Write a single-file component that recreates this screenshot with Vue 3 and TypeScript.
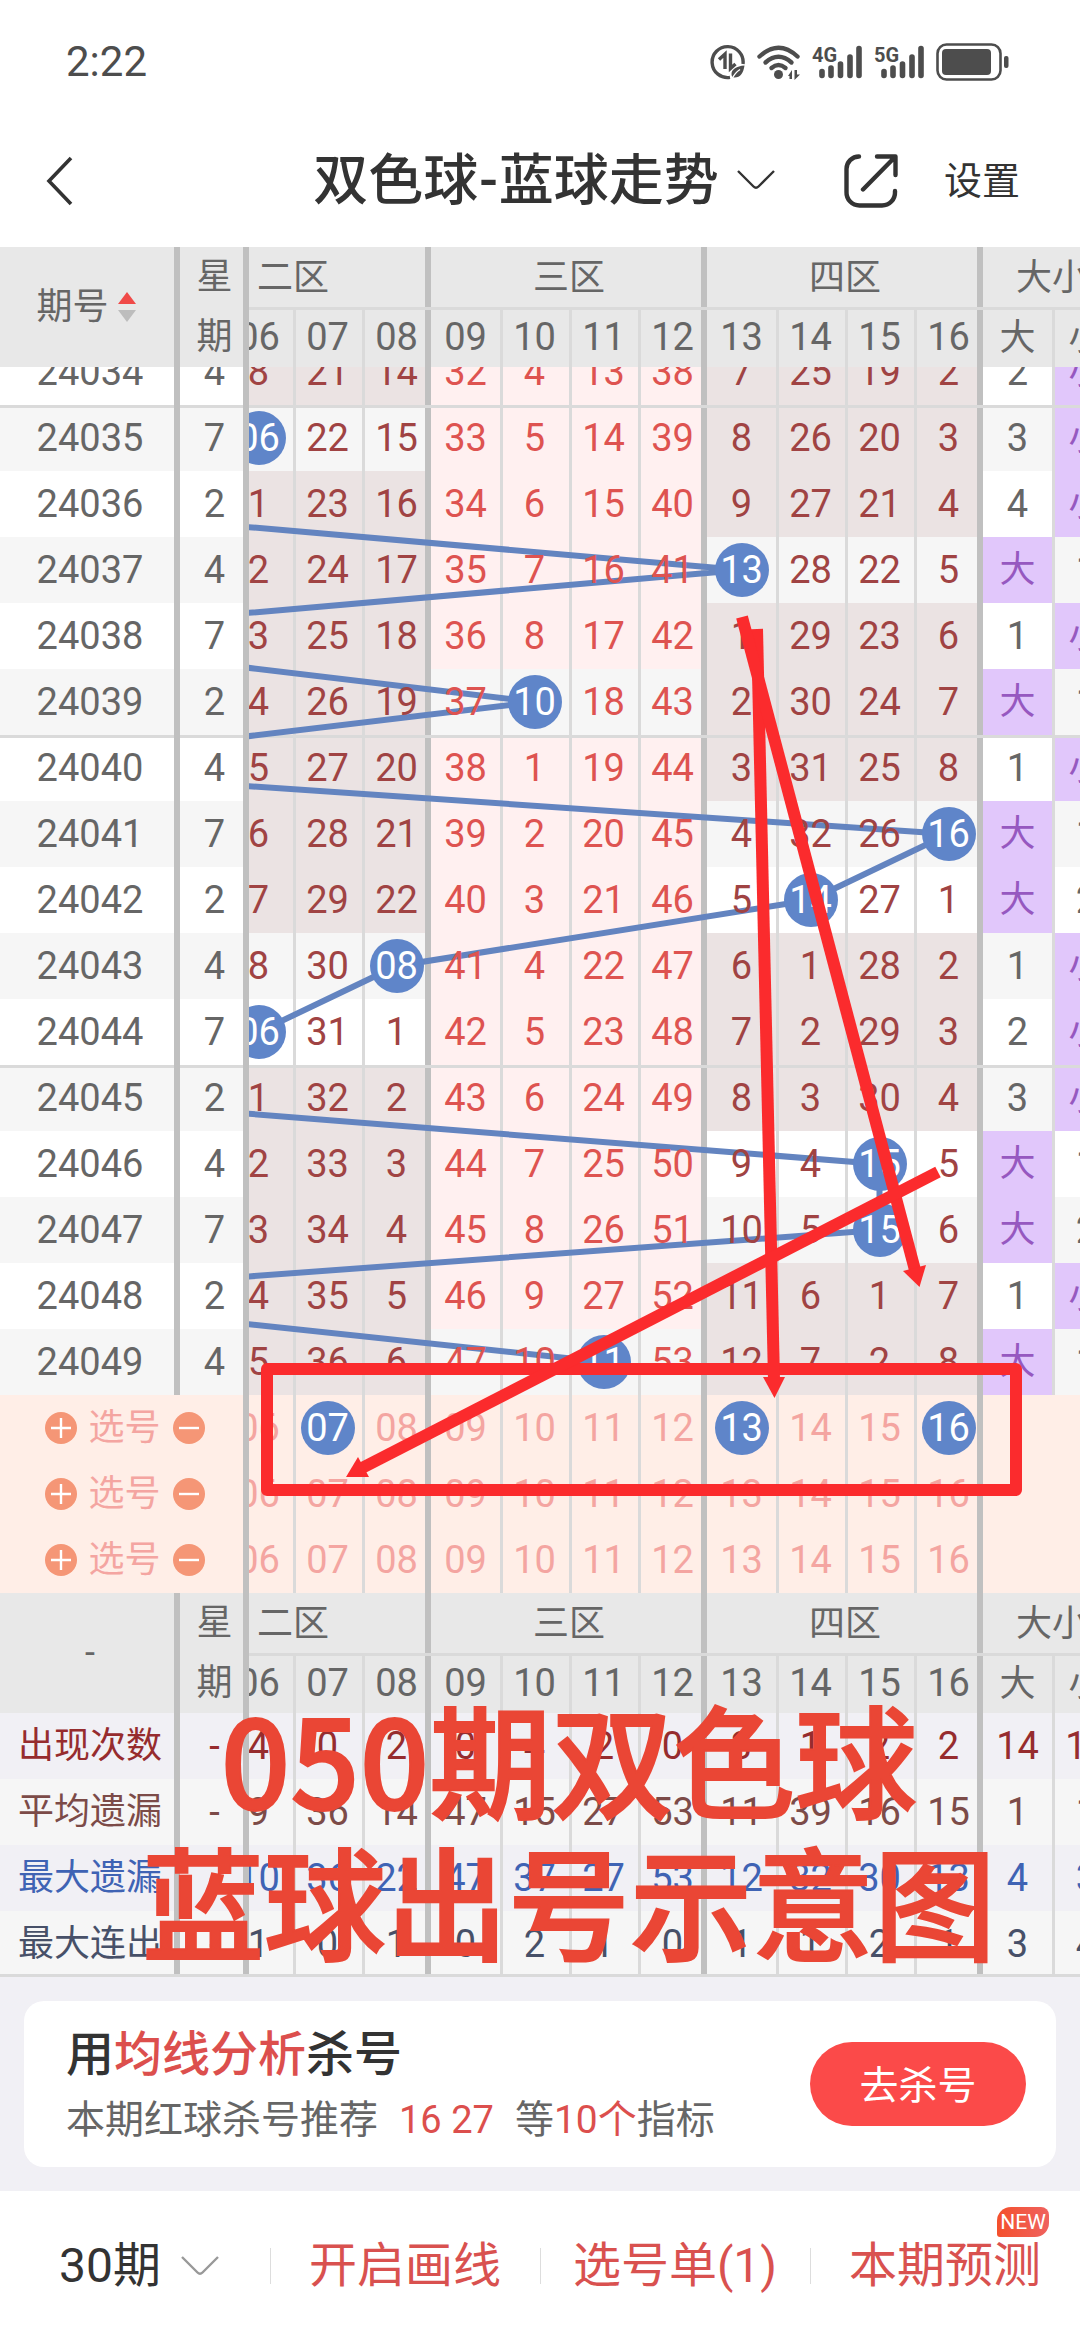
<script setup lang="ts">
import { ref } from 'vue'

type Kind = 'miss' | 'hit'
interface Cell { no: number; zone: number; kind: Kind; text: string; zoneHit: boolean }
interface Row { issue: number; week: number; cells: Cell[]; big: number; small: number }

const ROW = 66
const COL = 69
const FIRST = 5
const numbers = Array.from({ length: 12 }, (_, i) => i + FIRST)
const pad = (n: number) => String(n).padStart(2, '0')
const zoneOf = (n: number) => Math.ceil(n / 4)
const isZoneEnd = (n: number) => n % 4 === 0
const isZoneStart = (n: number) => n % 4 === 1

const zones = [
  { name: '二区', span: 4 },
  { name: '三区', span: 4 },
  { name: '四区', span: 4 },
]

// winning blue ball of each issue, from 24034 on
const draws = [3, 6, 2, 13, 2, 10, 2, 16, 14, 8, 6, 3, 15, 15, 2, 11]
const weeks = [4, 7, 2, 4, 7, 2, 4, 7, 2, 4, 7, 2, 4, 7, 2, 4]

function buildRows(): Row[] {
  const miss: Record<number, number> = {
    5: 16, 6: 7, 7: 20, 8: 13, 9: 31, 10: 3, 11: 12, 12: 37, 13: 6, 14: 24, 15: 18, 16: 1,
  }
  let big = 1
  let small = 0
  return draws.map((draw, i) => {
    const cells = numbers.map((no): Cell => {
      const hit = no === draw
      miss[no] = hit ? 0 : miss[no] + 1
      return {
        no,
        zone: zoneOf(no),
        kind: hit ? 'hit' : 'miss',
        text: hit ? pad(no) : String(miss[no]),
        zoneHit: zoneOf(draw) === zoneOf(no),
      }
    })
    big = draw > 8 ? 0 : big + 1
    small = draw > 8 ? small + 1 : 0
    return { issue: 24034 + i, week: weeks[i], cells, big, small }
  })
}
const rows = buildRows()

const trend = draws
  .map((n, i) => `${(n - FIRST) * COL + COL / 2},${i * ROW + ROW / 2}`)
  .join(' ')

const picks = ref<number[][]>([[7, 13, 16], [], []])
function toggle(line: number, n: number) {
  const list = picks.value[line]
  const at = list.indexOf(n)
  if (at < 0) list.push(n)
  else list.splice(at, 1)
}

const stats = [
  { key: 'count', name: '出现次数', values: [1, 4, 0, 2, 0, 4, 2, 0, 3, 1, 2, 2, 14, 16] },
  { key: 'avg', name: '平均遗漏', values: [16, 9, 36, 14, 47, 15, 27, 53, 11, 39, 16, 15, 1, 1] },
  { key: 'max', name: '最大遗漏', values: [16, 10, 36, 22, 47, 37, 27, 53, 12, 32, 30, 13, 4, 3] },
  { key: 'run', name: '最大连出', values: [1, 1, 0, 1, 0, 2, 1, 0, 1, 1, 2, 1, 3, 4] },
]
</script>

<template>
  <div class="app">
    <div class="status">
      <span class="clock">2:22</span>
      <div class="status-icons">
        <svg width="36" height="36" viewBox="0 0 36 36">
          <path d="M20 33.4A15.5 15.5 0 1 1 33 20" fill="none" stroke="#4d4d4d" stroke-width="3.4" />
          <path d="M9 15.5 15 10V25M20.5 9.500V24.500l5-4.500" fill="none" stroke="#4d4d4d" stroke-width="3.4" />
          <path d="M34.500 21.500c-8 .5-13 4-13 8.500 0 2.500 1 3.600 3 3.600 6 0 9-5 10-12.100z" fill="#4d4d4d" />
          <path d="M22 35c2-4.500 5-7.500 8-9.500" fill="none" stroke="#fff" stroke-width="1.400" />
        </svg>
        <svg width="46" height="36" viewBox="0 0 46 36">
          <g fill="none" stroke="#4d4d4d" stroke-width="4.400" stroke-linecap="round">
            <path d="M3.500 12.500Q22.500-5 41.500 12.500" />
            <path d="M9.500 18.500Q22.500 7 35.500 18.500" />
            <path d="M15.500 24Q22.500 18 29.500 24" />
          </g>
          <circle cx="22.500" cy="30.500" r="4.500" fill="#4d4d4d" />
          <path d="M32 32 36 26v9h-2.500v-3zM38.500 26H41v4.500h3L38.500 36z" fill="#4d4d4d" />
        </svg>
        <svg v-for="g in ['4G', '5G']" :key="g" width="52" height="36" viewBox="0 0 52 36">
          <text x="0" y="18" class="net">{{ g }}</text>
          <g stroke="#4d4d4d" stroke-width="5.600" stroke-linecap="round">
            <path d="M10 27.500V31.500M19 24V31.500M28.500 20V31.500M38 13V31.500M47 4.500V31.500" />
          </g>
        </svg>
        <svg width="74" height="38" viewBox="0 0 74 38">
          <rect x="1.500" y="1.500" width="63" height="35" rx="9" fill="none" stroke="#4d4d4d" stroke-width="2.600" />
          <rect x="6" y="6" width="49" height="26" rx="4" fill="#4d4d4d" />
          <rect x="68" y="13" width="4.500" height="12" rx="2" fill="#4d4d4d" />
        </svg>
      </div>
    </div>

    <header class="nav">
      <button class="back" aria-label="返回">
        <svg width="28" height="50" viewBox="0 0 28 50"><path d="M25 2 3 25 25 48" fill="none" stroke="#333" stroke-width="3.600" /></svg>
      </button>
      <button class="title">
        <span>双色球<span class="dash">-</span>蓝球走势</span>
        <svg width="38" height="20" viewBox="0 0 38 20"><path d="M1 1 16.500 16.500Q19 19 21.500 16.500L37 1" fill="none" stroke="#333" stroke-width="2.400" /></svg>
      </button>
      <div class="actions">
        <button aria-label="分享">
          <svg width="54" height="54" viewBox="0 0 54 54">
            <g fill="none" stroke="#333" stroke-width="4.400" stroke-linecap="round" stroke-linejoin="round">
              <path d="M15 2.500A12.500 12.500 0 0 0 2.500 15V38A13 13 0 0 0 15.500 51.500H38A13 13 0 0 0 51 38V37" />
              <path d="M33 2.500H51.500V21M51 3 19 35.500" />
            </g>
          </svg>
        </button>
        <button class="setting">设置</button>
      </div>
    </header>

    <main class="chart">
      <div class="frozen">
        <table class="grid left">
          <colgroup><col class="c-issue"><col class="c-week"></colgroup>
          <thead>
            <tr class="head-left">
              <th class="thick-r">
                <button class="sort">
                  期号
                  <svg width="18" height="30" viewBox="0 0 18 30"><path d="M9 0 18 12H0z" fill="#f04a48" /><path d="M0 18H18L9 30z" fill="#bdbdbd" /></svg>
                </button>
              </th>
              <th class="thick-r stack">星<br>期</th>
            </tr>
          </thead>
        </table>
        <div class="clip">
          <table class="grid left sheet">
            <colgroup><col class="c-issue"><col class="c-week"></colgroup>
            <tbody>
              <tr v-for="(r, i) in rows" :key="r.issue" :class="{ alt: i % 2 === 1, cut: i % 5 === 1 }">
                <td class="thick-r">{{ r.issue }}</td>
                <td class="thick-r">{{ r.week }}</td>
              </tr>
            </tbody>
          </table>
        </div>
        <table class="grid left">
          <colgroup><col class="c-issue"><col class="c-week"></colgroup>
          <tbody>
            <tr v-for="n in 3" :key="n" class="pick">
              <td colspan="2" class="thick-r">
                <div class="pick-tools">
                  <button aria-label="添加"><svg width="32" height="32" viewBox="0 0 32 32"><circle cx="16" cy="16" r="16" fill="#f59676" /><path d="M6 16H26M16 6V26" stroke="#fff" stroke-width="2.400" /></svg></button>
                  <span>选号</span>
                  <button aria-label="删除"><svg width="32" height="32" viewBox="0 0 32 32"><circle cx="16" cy="16" r="16" fill="#f59676" /><path d="M6 16H26" stroke="#fff" stroke-width="2.400" /></svg></button>
                </div>
              </td>
            </tr>
            <tr class="head-left">
              <th class="thick-r">-</th>
              <th class="thick-r stack">星<br>期</th>
            </tr>
            <tr v-for="s in stats" :key="s.key" class="stat" :class="s.key">
              <td class="thick-r zh">{{ s.name }}</td>
              <td class="thick-r">-</td>
            </tr>
          </tbody>
        </table>
      </div>

      <div class="pane">
        <div class="scroll">
          <table class="grid wide">
            <thead>
              <tr class="head">
                <th v-for="z in zones" :key="z.name" :colspan="z.span" class="thick-r zh">{{ z.name }}</th>
                <th colspan="2" class="zh">大小</th>
              </tr>
              <tr class="head second">
                <th v-for="n in numbers" :key="n" :class="{ 'thick-r': isZoneEnd(n), 'thin-l': !isZoneStart(n) }">{{ pad(n) }}</th>
                <th class="zh">大</th>
                <th class="zh thin-l">小</th>
              </tr>
            </thead>
          </table>
          <div class="clip">
            <div class="sheet">
              <table class="grid wide">
                <tbody>
                  <tr v-for="(r, i) in rows" :key="r.issue" :class="{ alt: i % 2 === 1, cut: i % 5 === 1 }">
                    <td
                      v-for="c in r.cells"
                      :key="c.no"
                      :class="['z' + c.zone, { cold: !c.zoneHit, 'thick-r': isZoneEnd(c.no), 'thin-l': !isZoneStart(c.no) }]"
                    ><span class="n" :class="{ ball: c.kind === 'hit' }">{{ c.text }}</span></td>
                    <td :class="{ lilac: r.big === 0 }"><span class="n">{{ r.big || '大' }}</span></td>
                    <td class="thin-l" :class="{ lilac: r.small === 0 }"><span class="n">{{ r.small || '小' }}</span></td>
                  </tr>
                </tbody>
              </table>
              <svg class="trend" width="966" height="1056" viewBox="0 0 966 1056">
                <polyline :points="trend" fill="none" stroke="#6384c0" stroke-width="6" />
              </svg>
            </div>
          </div>
          <table class="grid wide">
            <tbody>
              <tr v-for="(list, line) in picks" :key="line" class="pick">
                <td v-for="n in numbers" :key="n" :class="{ 'thick-r': isZoneEnd(n), 'thin-l': !isZoneStart(n) }">
                  <button class="n" :class="{ ball: list.includes(n) }" :aria-pressed="list.includes(n)" @click="toggle(line, n)">{{ pad(n) }}</button>
                </td>
                <td colspan="2"></td>
              </tr>
              <tr class="head">
                <th v-for="z in zones" :key="z.name" :colspan="z.span" class="thick-r zh">{{ z.name }}</th>
                <th colspan="2" class="zh">大小</th>
              </tr>
              <tr class="head second">
                <th v-for="n in numbers" :key="n" :class="{ 'thick-r': isZoneEnd(n), 'thin-l': !isZoneStart(n) }">{{ pad(n) }}</th>
                <th class="zh">大</th>
                <th class="zh thin-l">小</th>
              </tr>
              <tr v-for="s in stats" :key="s.key" class="stat" :class="s.key">
                <td
                  v-for="(v, i) in s.values"
                  :key="i"
                  :class="{ 'thick-r': i < 12 && i % 4 === 3, 'thin-l': i % 4 !== 0 }"
                >{{ v }}</td>
              </tr>
            </tbody>
          </table>
        </div>
      </div>

      <svg class="marks" width="1080" height="1300" viewBox="0 247 1080 1300">
        <g fill="none" stroke="#fb2b2d" stroke-width="12">
          <rect x="267" y="1369" width="749" height="121" stroke-linejoin="round" />
          <path d="M757 629 774 1380" />
          <path d="M742 617 915 1270" />
          <path d="M938 1172 360 1469" />
        </g>
        <g fill="#fb2b2d">
          <path d="M763 1377H785L774.500 1398z" />
          <path d="M903 1271 926 1265 919.500 1287z" />
          <path d="M358 1457 369 1477 346 1477z" />
        </g>
      </svg>
      <div class="caption">050期双色球<br>蓝球出号示意图</div>
    </main>

    <section class="promo">
      <div class="card">
        <div class="copy">
          <h2>用<em>均线分析</em>杀号</h2>
          <p>本期红球杀号推荐<em class="nums">16 27</em>等<em>10个</em>指标</p>
        </div>
        <button class="go">去杀号</button>
      </div>
    </section>

    <nav class="tabs">
      <button class="range">
        30期
        <svg width="38" height="20" viewBox="0 0 38 20"><path d="M1 1 16.500 16.500Q19 19 21.500 16.500L37 1" fill="none" stroke="#999" stroke-width="2.400" /></svg>
      </button>
      <button>开启画线</button>
      <button>选号单(1)</button>
      <button>本期预测<span class="badge">NEW</span></button>
    </nav>
  </div>
</template>

<style>
body { background: #fff; }
</style>

<style scoped>
.app {
  font-family: Roboto, "Noto Sans CJK SC", sans-serif;
  color: #333;
  background: #fff;
  overflow: hidden;
}
button {
  appearance: none;
  border: 0;
  padding: 0;
  margin: 0;
  background: none;
  font: inherit;
  color: inherit;
}
svg { display: block; flex: none; }
em { font-style: normal; color: #dc4f4d; }

.status {
  display: flex;
  align-items: center;
  justify-content: space-between;
  height: 122px;
  padding: 2px 70px 0 66px;
  box-sizing: border-box;
  color: #4d4d4d;
}
.clock { font-size: 42px; line-height: 48px; }
.status-icons { display: flex; align-items: center; gap: 10px; }
.net { font-size: 20px; font-weight: 700; fill: #4d4d4d; }

.nav {
  display: grid;
  grid-template-columns: 1fr auto 1fr;
  align-items: center;
  height: 117px;
  padding: 0 60px 8px 46px;
}
.back { justify-self: start; }
.title {
  display: flex;
  align-items: center;
  gap: 18px;
  padding: 0 0 2px 22px;
  font-size: 55px;
  font-weight: 500;
  line-height: 60px;
  white-space: nowrap;
}
.dash { padding: 0 1px; }
.actions { display: flex; align-items: center; justify-content: flex-end; gap: 46px; }
.setting { font-size: 38px; line-height: 48px; white-space: nowrap; }

.chart { position: relative; display: flex; font-size: 38px; color: #666; }
.frozen { flex: none; width: 249px; }
.pane { flex: 1; min-width: 0; overflow: hidden; }
.scroll { margin-left: -94px; width: 966px; }
.clip { overflow: hidden; }
.sheet { position: relative; margin-top: -28px; }

.grid { border-spacing: 0; border-collapse: separate; table-layout: fixed; text-align: center; }
.left { width: 249px; }
.wide { width: 966px; }
.c-issue { width: 180px; }
.c-week { width: 69px; }
td, th {
  --top: 0px;
  --left: 0px;
  --right: 0px;
  box-sizing: border-box;
  height: 66px;
  padding: 0;
  line-height: 60px;
  font-weight: 400;
  box-shadow: inset 0 var(--top) #dadada, inset var(--left) 0 #dadada, inset calc(0px - var(--right)) 0 #c0c0c0;
}
.left td, .left th {
  box-shadow: inset calc(0px - var(--right)) 0 #c0c0c0, inset 0 var(--top) #dadada;
}
.thick-r { --right: 6px; }
.thin-l { --left: 3px; }
.cut td { --top: 3px; }
.alt { background: #f6f6f6; }
.zh { font-size: 36px; }

.head, .head-left { background: #e8e8e8; }
.head th { height: 60px; }
.head .zh { padding-top: 2px; line-height: 58px; }
.second th { --top: 3px; }
.head-left th { height: 120px; font-size: 36px; }
.stack { line-height: 60px; }
.sort { display: inline-flex; align-items: center; gap: 9px; padding-right: 8px; line-height: 48px; }

.n {
  position: relative;
  z-index: 1;
  display: block;
  width: 54px;
  height: 54px;
  margin: 0 auto;
  line-height: 54px;
  border-radius: 50%;
}
.z2, .z4 { color: #a04343; }
.z3 { color: #de5350; }
.z2.cold, .z4.cold { background: #ebe3e3; }
.z3.cold { background: #fff0f0; }
.lilac { background: #e1c7fb; color: #9658c0; }
.lilac .n { font-size: 36px; }
.ball { background: #5f85c9; color: #fff; }
.trend { position: absolute; top: 0; left: 0; }

.pick { background: #ffeee7; color: #f4a5a1; }
.pick-tools { display: flex; align-items: center; justify-content: center; gap: 12px; font-size: 36px; }

.stat { background: #f6f6f6; }
.count { background: #f1f0f5; color: #962c2e; }
.avg { color: #7c4b48; }
.max { background: #f1f0f5; color: #3f63b4; }
.run { color: #475068; }
.run td { box-shadow: inset 0 -3px #dadada, inset var(--left) 0 #dadada, inset calc(0px - var(--right)) 0 #c0c0c0; }

.marks { position: absolute; top: 0; left: 0; z-index: 2; pointer-events: none; }
.caption {
  position: absolute;
  z-index: 3;
  left: 58px;
  right: 0;
  bottom: 8px;
  font-family: "Noto Sans CJK SC", sans-serif;
  font-size: 122px;
  font-weight: 500;
  line-height: 142px;
  text-align: center;
  color: #ea4635;
  -webkit-text-stroke: 2px #ea4635;
  pointer-events: none;
}

.promo { padding: 24px; background: #f1f0f5; }
.card {
  display: flex;
  align-items: center;
  justify-content: space-between;
  padding: 24px 30px 12px 42px;
  border-radius: 20px;
  background: #fff;
}
.copy h2 { margin: 0; font-size: 48px; font-weight: 500; line-height: 60px; }
.copy p { margin: 0; font-size: 39px; line-height: 70px; color: #666; white-space: nowrap; }
.copy .nums { margin: 0 21px; font-size: 38px; }
.go {
  width: 216px;
  height: 84px;
  margin-bottom: 12px;
  padding-bottom: 4px;
  border-radius: 42px;
  background: #fb4a49;
  color: #fff;
  font-size: 39px;
}

.tabs { display: grid; grid-template-columns: repeat(4, 1fr); align-items: center; height: 146px; padding-top: 2px; }
.tabs button {
  position: relative;
  display: flex;
  align-items: center;
  justify-content: center;
  height: 60px;
  font-size: 48px;
  line-height: 60px;
  color: #d9514f;
  white-space: nowrap;
}
.tabs button + button::before {
  content: "";
  position: absolute;
  left: 0;
  top: 12px;
  width: 1px;
  height: 36px;
  background: #ddd;
}
.tabs .range { gap: 20px; padding-left: 8px; color: #333; }
.badge {
  position: absolute;
  right: 31px;
  top: -29px;
  width: 52px;
  height: 30px;
  border-radius: 14px 8px 14px 3px;
  background: linear-gradient(90deg, #f4502c, #ef625f);
  color: #fff;
  font-size: 21px;
  line-height: 31px;
  text-align: center;
}
</style>
